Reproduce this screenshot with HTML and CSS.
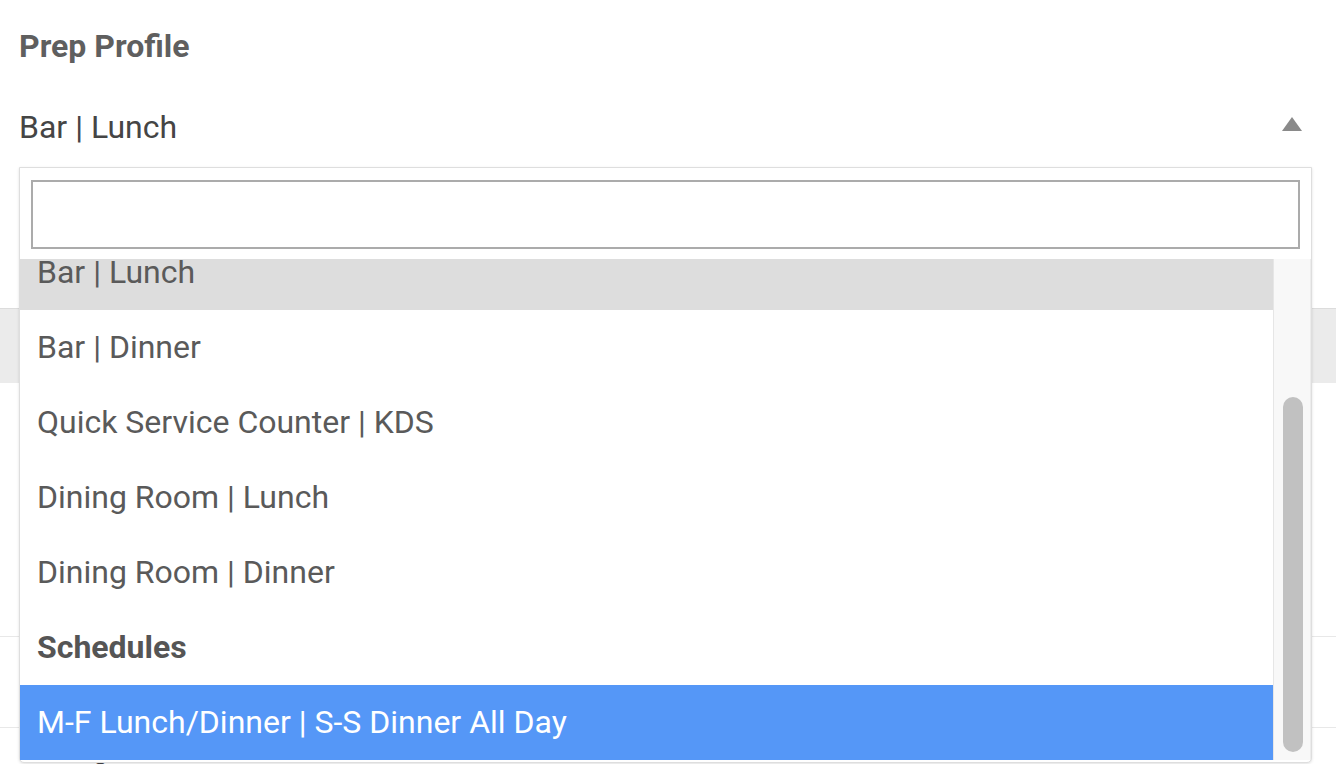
FILE: index.html
```html
<!DOCTYPE html>
<html lang="en">
<head>
    <meta charset="UTF-8">
    <meta name="viewport" content="width=device-width, initial-scale=1.0">
    <title>Prep Profile</title>
    <link rel="stylesheet" href="styles.css">
</head>
<body>
    <div class="field">
        <div class="field-label">Prep Profile</div>
        <div class="select">
            <span class="select-value">Bar | Lunch</span>
            <span class="arrow"></span>
        </div>
    </div>
    <div class="band"></div>
    <div class="gap"></div>
    <div class="row"></div>
    <div class="row row-text">Notifications</div>

    <!-- open dropdown -->
    <div class="dropdown">
        <div class="search-wrap">
            <input type="text" class="search">
        </div>
        <div class="options">
            <ul class="option-list">
                <li class="option hovered">Bar | Lunch</li>
                <li class="option">Bar | Dinner</li>
                <li class="option">Quick Service Counter | KDS</li>
                <li class="option">Dining Room | Lunch</li>
                <li class="option">Dining Room | Dinner</li>
                <li class="option group">Schedules</li>
                <li class="option selected">M-F Lunch/Dinner | S-S Dinner All Day</li>
            </ul>
            <div class="scrollbar">
                <div class="thumb"></div>
            </div>
        </div>
    </div>
</body>
</html>
```

FILE: styles.css
```css
body {
    margin: 0;
    font-family: Roboto, "Liberation Sans", sans-serif;
    background: #fff;
    position: relative;
    height: 764px;
    overflow: hidden;
}
.field {
    box-sizing: border-box;
    height: 308px;
    padding: 26px 34px 0 19px;
}
.field-label {
    font-size: 32px;
    font-weight: 700;
    color: #5f5f5f;
    line-height: 40px;
}
.select {
    display: flex;
    justify-content: space-between;
    align-items: center;
    margin-top: 41px;
    height: 40px;
}
.select-value {
    font-size: 32px;
    color: #454545;
}
.arrow {
    width: 0;
    height: 0;
    border-left: 10px solid transparent;
    border-right: 10px solid transparent;
    border-bottom: 14px solid #8a8a8a;
    margin-top: -6px;
}
.band {
    height: 74px;
    background: #ebebeb;
    border-top: 1px solid #dcdcdc;
}
.gap {
    height: 253px;
}
.row {
    height: 90px;
    border-top: 1px solid #e8e8e8;
}
.row-text {
    box-sizing: border-box;
    padding: 30px 40px 0;
    font-size: 28px;
    color: #444;
}
.dropdown {
    position: absolute;
    left: 19px;
    top: 167px;
    width: 1293px;
    height: 596px;
    box-sizing: border-box;
    background: #fff;
    border: 1px solid #dedede;
    border-radius: 0 0 5px 5px;
    box-shadow: 0 1px 3px rgba(0, 0, 0, 0.12);
    display: flex;
    flex-direction: column;
}
.search-wrap {
    padding: 12px 11px 10px;
}
.search {
    display: block;
    box-sizing: border-box;
    width: 100%;
    height: 69px;
    border: 2px solid #ababab;
    border-radius: 0;
    outline: none;
    font-size: 32px;
    padding: 0 10px;
}
.options {
    flex: 1;
    display: flex;
    overflow: hidden;
    margin-bottom: 2px;
}
.option-list {
    flex: 1;
    list-style: none;
    margin: -24px 0 0;
    padding: 0;
}
.option {
    height: 75px;
    line-height: 75px;
    padding-left: 17px;
    font-size: 32px;
    color: #5a5a5a;
    white-space: nowrap;
}
.option.hovered {
    background: #dddddd;
}
.option.group {
    font-weight: 700;
    color: #555;
}
.option.selected {
    background: #5597f7;
    color: #fff;
}
.scrollbar {
    width: 36px;
    background: #f8f8f8;
    border-left: 1px solid #e6e6e6;
    border-right: 1px solid #ececec;
    position: relative;
}
.thumb {
    position: absolute;
    left: 9px;
    top: 138px;
    width: 20px;
    height: 355px;
    border-radius: 10px;
    background: #c1c1c1;
}
```
